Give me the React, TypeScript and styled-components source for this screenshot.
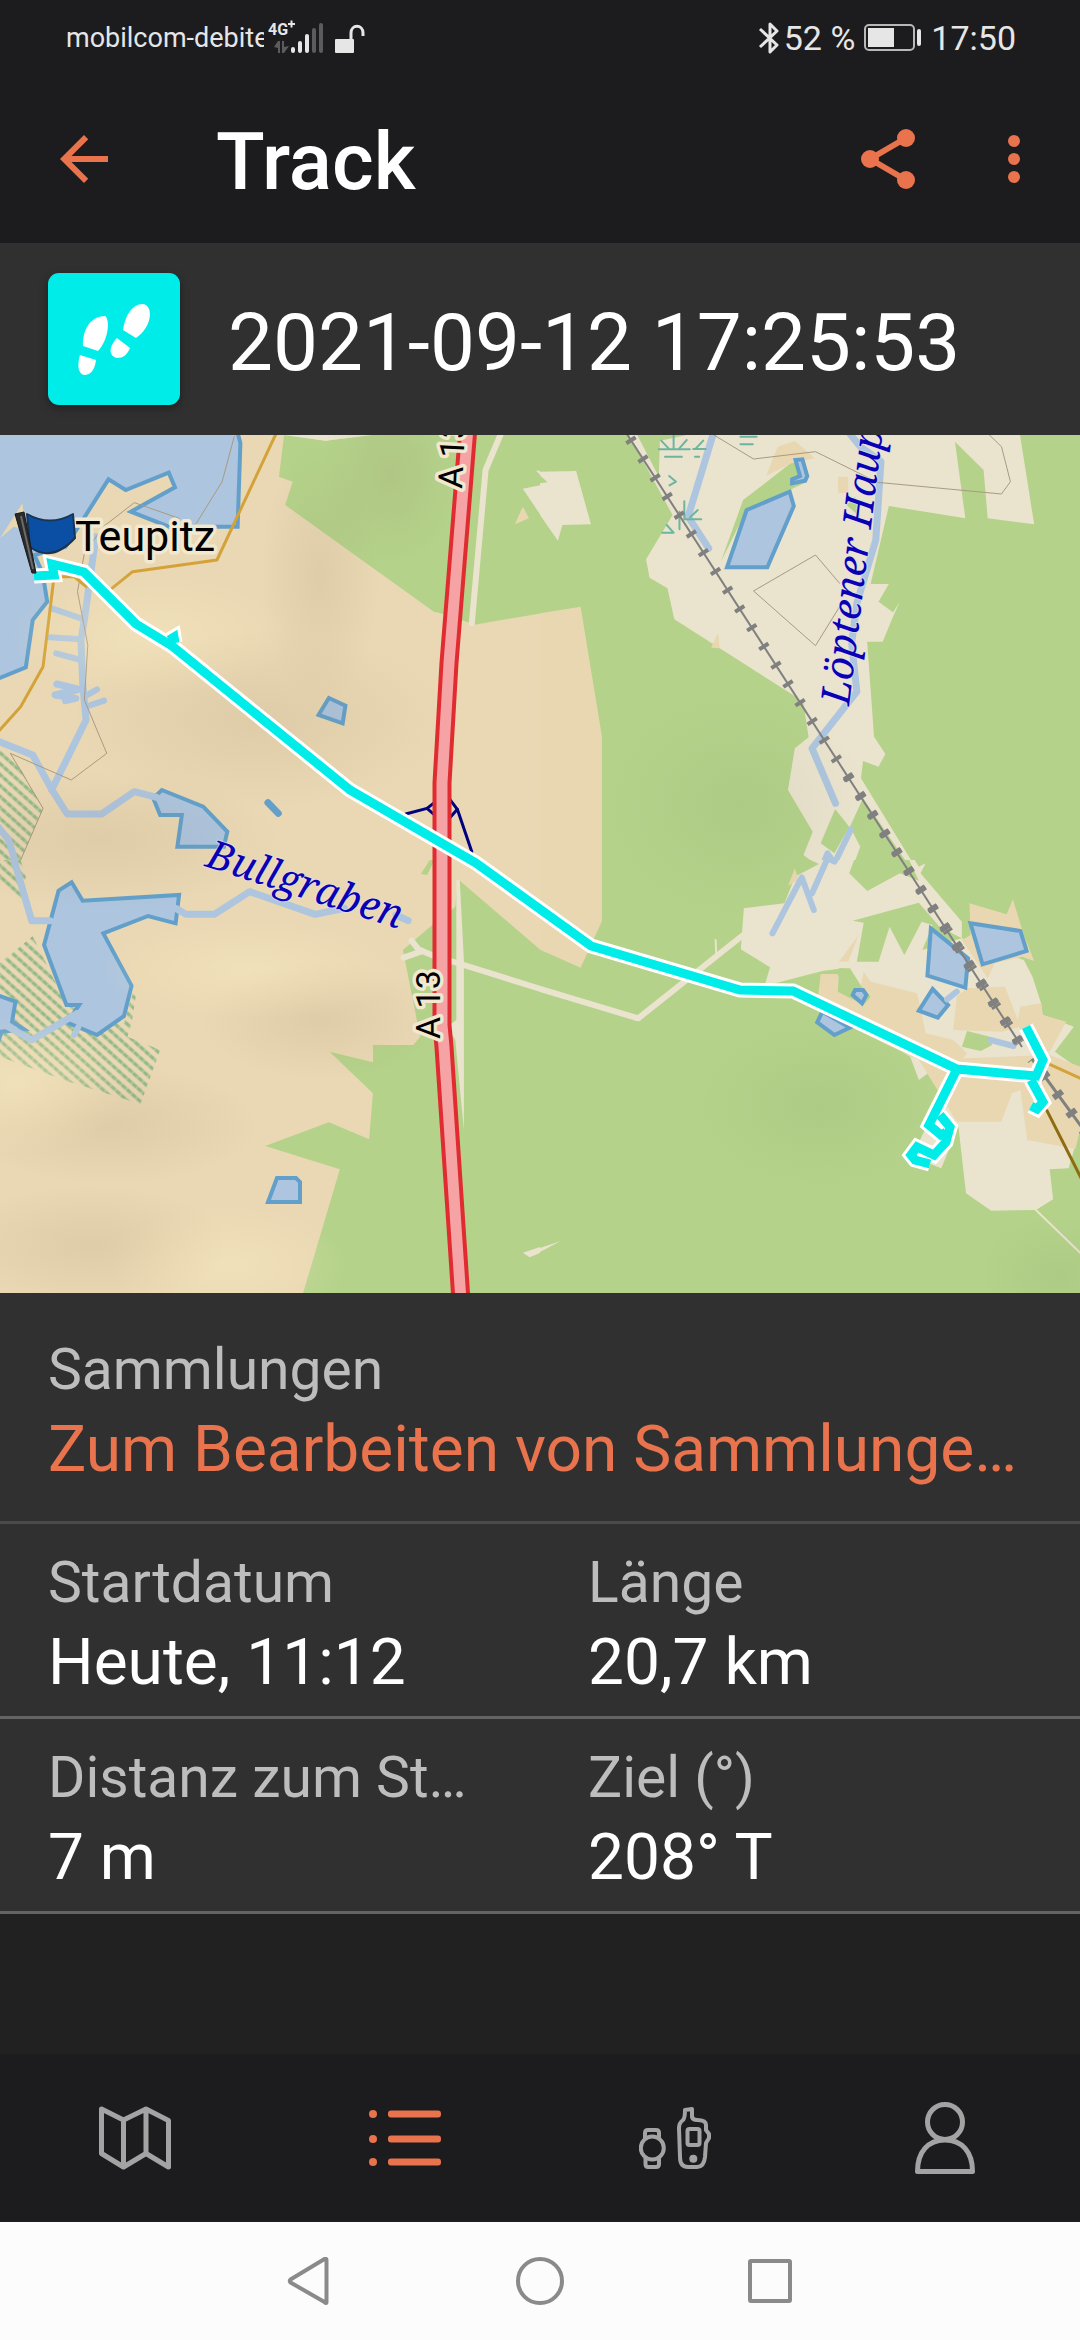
import React from "react";
import styled, { createGlobalStyle } from "styled-components";

const color = {
  bar: "#1c1c1e",
  panel: "#303030",
  page: "#212121",
  accent: "#e9734c",
  label: "#bdbdbd",
  icon: "#a3a3a3",
  cyan: "#00ece9",
  status: "#e6e6e6",
};

const GlobalStyle = createGlobalStyle`
  *, *::before, *::after { box-sizing: border-box; }
  body {
    margin: 0;
    background: ${color.page};
    font-family: Roboto, "Noto Sans", sans-serif;
  }
  h1, h2, dl, dt, dd, p { margin: 0; font-weight: 400; }
`;

const Screen = styled.div`
  display: flex;
  flex-direction: column;
  min-height: 100vh;
  background: ${color.page};
  color: #ffffff;
`;

const StatusBar = styled.div`
  display: flex;
  align-items: center;
  height: 75px;
  padding: 0 64px 0 66px;
  background: ${color.bar};
  color: ${color.status};
`;

const Carrier = styled.span`
  width: 198px;
  overflow: hidden;
  white-space: nowrap;
  font-size: 27px;
  line-height: 36px;
`;

const StatusGroup = styled.div<{ $end?: boolean; $tight?: boolean }>`
  display: flex;
  align-items: center;
  gap: ${(p) => (p.$tight ? 4 : 8)}px;
  margin-left: ${(p) => (p.$end ? "auto" : p.$tight ? "0" : "4px")};
`;

const StatusText = styled.span`
  font-size: 34px;
  line-height: 40px;
`;

const TitleBar = styled.header`
  display: flex;
  align-items: center;
  height: 168px;
  padding: 0 30px 0 48px;
  background: ${color.bar};
`;

const IconButton = styled.button`
  display: flex;
  align-items: center;
  justify-content: center;
  width: 72px;
  height: 72px;
  padding: 0;
  border: 0;
  background: none;
  color: ${color.accent};
  cursor: pointer;
`;

const Title = styled.h1`
  flex: 1;
  padding: 6px 0 0 96px;
  font-size: 80px;
  font-weight: 500;
  line-height: 94px;
`;

const Actions = styled.div`
  display: flex;
  gap: 54px;
`;

const TrackHeader = styled.section`
  display: flex;
  align-items: center;
  gap: 48px;
  height: 192px;
  padding: 0 48px;
  background: ${color.panel};
`;

const Badge = styled.span`
  display: flex;
  width: 132px;
  height: 132px;
  border-radius: 11px;
  background: ${color.cyan};
  box-shadow: 0 3px 8px rgba(0, 0, 0, 0.35);
`;

const TrackName = styled.h2`
  padding-top: 8px;
  font-size: 80px;
  line-height: 94px;
  white-space: nowrap;
`;

const MapView = styled.svg`
  display: block;
  width: 100%;
  height: auto;
`;

const MapLabel = styled.text<{ $size: number; $water?: boolean }>`
  font-family: ${(p) =>
    p.$water ? '"Noto Serif", "Liberation Serif", serif' : "Roboto, sans-serif"};
  font-style: ${(p) => (p.$water ? "italic" : "normal")};
  font-size: ${(p) => p.$size}px;
  fill: ${(p) => (p.$water ? "#0a00b4" : "#000000")};
  stroke: ${(p) => (p.$water ? "rgba(225,225,240,0.6)" : "#f1e8cf")};
  stroke-width: ${(p) => (p.$water ? 2 : 7)}px;
  stroke-linejoin: round;
  paint-order: stroke;
`;

const Details = styled.dl`
  display: flex;
  flex-direction: column;
  background: ${color.panel};
`;

const DetailRow = styled.div<{ $single?: boolean }>`
  display: grid;
  grid-template-columns: ${(p) => (p.$single ? "1fr" : "1fr 1fr")};
  padding: ${(p) => (p.$single ? "44px 0 34px" : "26px 0 16px")};
  border-bottom: 3px solid ${(p) => (p.$single ? "#4a4a4a" : "#646464")};
`;

const Detail = styled.div`
  display: flex;
  flex-direction: column;
  gap: 10px;
  min-width: 0;
  padding: 0 48px;
`;

const Label = styled.dt`
  overflow: hidden;
  text-overflow: ellipsis;
  white-space: nowrap;
  color: ${color.label};
  font-size: 57px;
  line-height: 66px;
`;

const Value = styled.dd`
  overflow: hidden;
  white-space: nowrap;
  font-size: 64px;
  line-height: 74px;
`;

const CollectionLink = styled.a`
  color: ${color.accent};
  text-decoration: none;
`;

const Filler = styled.div`
  flex: 1;
`;

const TabBar = styled.nav`
  display: grid;
  grid-template-columns: repeat(4, 1fr);
  justify-items: center;
  align-items: center;
  height: 168px;
  background: ${color.bar};
`;

const TabButton = styled(IconButton)<{ $active?: boolean }>`
  color: ${(p) => (p.$active ? color.accent : color.icon)};
`;

const SystemBar = styled.div`
  display: flex;
  align-items: center;
  justify-content: center;
  gap: 182px;
  height: 118px;
  background: #fcfcfc;
`;

const SystemButton = styled(IconButton)`
  width: 48px;
  height: 48px;
  color: #8a8a8a;
`;

/* ---------- map data ---------- */

type Shape = { kind: keyof typeof areaStyle; pts: string };
type Line = { kind: keyof typeof lineStyle; pts: string };

const areaStyle = {
  forest: { fill: "#b4d28a" },
  meadow: { fill: "#eae3ce" },
  field: { fill: "#e8d7b1" },
  water: { fill: "#adc5de", stroke: "#62a0cb", strokeWidth: 4 },
  marsh: { fill: "url(#marsh)" },
};

const lineStyle = {
  stream: { stroke: "#adc5de", strokeWidth: 7 },
  streamSmall: { stroke: "#adc5de", strokeWidth: 6 },
  bluff: { stroke: "#62a0cb", strokeWidth: 7 },
  gold: { stroke: "#d3a33a", strokeWidth: 3 },
  brown: { stroke: "#8e6d12", strokeWidth: 3 },
  boundary: { stroke: "#a99a82", strokeWidth: 1 },
  lane: { stroke: "#eae3ce", strokeWidth: 6 },
  laneThin: { stroke: "#eae3ce", strokeWidth: 2 },
  ramp: { stroke: "#000080", strokeWidth: 3 },
  reed: { stroke: "#6db5a0", strokeWidth: 2 },
};

type Tile = { id: string; transform: string; clip: string; areas: Shape[]; lines: Line[] };

const tiles: Tile[] = [
  {
    id: "nw",
    transform: "translate(0 -5) scale(0.34439 0.33333)",
    clip: "0,0 1568,0 1568,1290 0,1290",
    areas: [
      { kind: "forest", pts: "825,15 945,32 1080,15 1570,10 1570,550 1378,584 1300,555 1260,545 828,225 850,155 810,140" },
      { kind: "meadow", pts: "825,15 945,32 1080,15 1080,5 825,5" },
      { kind: "meadow", pts: "1518,176 1570,165 1570,256" },
      { kind: "meadow", pts: "1556,122 1570,122 1570,135" },
      { kind: "field", pts: "1518,230 1536,265 1495,283" },
      { kind: "water", pts: "-10,0 688,0 698,40 690,290 490,290 380,245 508,172 490,128 365,180 315,148 245,262 190,350 100,375 124,430 137,515 95,570 75,712 -10,748" },
      { kind: "field", pts: "0,325 65,220 75,300 40,290" },
      { kind: "water", pts: "470,1080 590,1130 660,1205 650,1250 515,1250 528,1155 465,1155 445,1105" },
      { kind: "water", pts: "955,804 1003,827 995,880 925,855" },
      { kind: "marsh", pts: "0,945 40,980 125,1135 60,1290 50,1320 0,1320" },
    ],
    lines: [
      { kind: "stream", pts: "278,320 245,570 235,630 240,760 250,870 150,1080" },
      { kind: "streamSmall", pts: "150,535 235,565" },
      { kind: "streamSmall", pts: "145,622 235,628" },
      { kind: "streamSmall", pts: "163,670 235,690" },
      { kind: "stream", pts: "165,762 230,778 160,795 220,805 190,812" },
      { kind: "streamSmall", pts: "245,800 282,778" },
      { kind: "streamSmall", pts: "250,830 302,812" },
      { kind: "stream", pts: "-10,932 95,975 150,1078 195,1152 295,1152 390,1085 455,1102" },
      { kind: "stream", pts: "-10,1185 25,1230 55,1330" },
      { kind: "boundary", pts: "680,20 645,155 570,280" },
      { kind: "boundary", pts: "520,265 390,218 300,290 245,370 225,485 255,645 245,810 310,970 207,1050 30,970 125,1135 60,1290 20,1330" },
      { kind: "lane", pts: "1455,10 1410,120 1370,580" },
      { kind: "gold", pts: "802,10 630,390 385,425 325,475" },
      { kind: "gold", pts: "250,470 215,440 157,440 125,710 60,830 -5,905" },
      { kind: "bluff", pts: "778,1118 808,1150" },
      { kind: "ramp", pts: "1178,1152 1240,1135 1265,1115" },
      { kind: "ramp", pts: "1240,1135 1265,1158" },
      { kind: "ramp", pts: "1300,1100 1328,1138 1370,1265" },
      { kind: "ramp", pts: "1305,1165 1328,1138" },
    ],
  },
  {
    id: "ne",
    transform: "translate(540 -5) scale(0.34439 0.33333)",
    clip: "0,0 1570,0 1570,1290 0,1290",
    areas: [
      { kind: "forest", pts: "-2,0 1570,0 1570,1320 -2,1320" },
      { kind: "field", pts: "-2,550 118,530 180,920 180,1320 -2,1320" },
      { kind: "meadow", pts: "-2,125 105,123 148,283 65,285 52,332 -2,252" },
      { kind: "forest", pts: "-2,135 22,157 -2,160" },
      { kind: "meadow", pts: "250,0 280,10 345,140 348,32 425,15 1393,10 1435,283 1300,265 1288,120 1205,35 1235,265 1013,228 960,462 1013,462 983,515 1025,547 1045,515 1025,560 995,635 950,635 970,920 1003,972 983,1010 938,993 932,1045 1095,1320 1080,1320 938,1105 900,1190 930,1250 905,1320 810,1310 765,1275 792,1205 720,1080 740,955 780,922 765,820 735,795 390,568 370,475 318,443 308,388 385,255" },
      { kind: "forest", pts: "740,90 775,155 725,180 600,240 525,395 590,210" },
      { kind: "forest", pts: "857,1137 898,1190 855,1270 815,1240" },
      { kind: "field", pts: "690,50 740,33 798,85 730,100 657,137" },
      { kind: "field", pts: "865,140 895,140 895,190 865,188" },
      { kind: "field", pts: "517,608 522,655 497,653" },
      { kind: "forest", pts: "915,200 930,262 890,225" },
      { kind: "water", pts: "600,240 725,185 737,228 660,412 543,412" },
      { kind: "water", pts: "742,90 762,88 776,138 770,152 732,160 732,148 755,138" },
    ],
    lines: [
      { kind: "stream", pts: "505,5 430,260 490,355" },
      { kind: "stream", pts: "895,5 930,50 990,95 975,330 920,520 905,640 920,785 790,955 858,1120" },
      { kind: "streamSmall", pts: "903,1198 855,1300 835,1270 810,1330" },
      { kind: "boundary", pts: "505,15 620,87 800,65 980,157 1340,192 1366,155 1340,50 1300,10" },
      { kind: "boundary", pts: "870,460 800,375 620,483 800,647 870,530" },
      { kind: "reed", pts: "345,58 435,58" },
      { kind: "reed", pts: "388,15 388,58" },
      { kind: "reed", pts: "352,32 374,56" },
      { kind: "reed", pts: "426,30 404,56" },
      { kind: "reed", pts: "363,80 412,80" },
      { kind: "reed", pts: "445,57 481,57" },
      { kind: "reed", pts: "474,32 452,56" },
      { kind: "reed", pts: "450,80 462,80" },
      { kind: "reed", pts: "582,20 629,20" },
      { kind: "reed", pts: "582,43 618,43" },
      { kind: "reed", pts: "375,138 395,155 376,166" },
      { kind: "reed", pts: "419,214 419,268 468,268" },
      { kind: "reed", pts: "405,245 405,298" },
      { kind: "reed", pts: "436,262 458,240" },
      { kind: "reed", pts: "355,308 388,308 368,285" },
    ],
  },
  {
    id: "sw",
    transform: "translate(0 425) scale(0.34439 0.33333)",
    clip: "0,0 1568,0 1568,1310 0,1310",
    areas: [
      { kind: "marsh", pts: "0,0 60,0 75,50 60,130 0,60" },
      { kind: "marsh", pts: "95,228 193,435 360,490 385,400 395,405 382,490 370,530 465,570 408,732 200,665 0,590 0,310" },
      { kind: "forest", pts: "1248,0 1222,42 1240,45 1262,0" },
      { kind: "forest", pts: "1330,58 1570,270 1570,1310 877,1310 987,928 770,858 955,787 1072,838 1083,700 957,575 1083,607 1083,555 1200,555 1220,530 1170,270 1255,195 1322,140" },
      { kind: "meadow", pts: "1325,60 1335,60 1347,300 1347,810 1322,540 1300,500 1325,480" },
      { kind: "meadow", pts: "1518,1178 1570,1160 1570,1178 1538,1192" },
      { kind: "water", pts: "170,92 208,67 240,122 520,105 510,190 430,168 300,220 382,377 360,468 282,525 195,488 230,435 193,435 128,255" },
      { kind: "water", pts: "-10,405 45,425 35,485 70,508 5,515 -10,560" },
    ],
    lines: [
      { kind: "stream", pts: "38,-10 92,182 145,182" },
      { kind: "stream", pts: "510,145 540,163 622,163 725,95 915,163 1000,145" },
      { kind: "stream", pts: "1150,165 1185,182" },
      { kind: "stream", pts: "225,460 92,540 15,495" },
      { kind: "streamSmall", pts: "228,500 215,525" },
      { kind: "lane", pts: "1195,242 1215,268 1260,288" },
      { kind: "lane", pts: "1172,293 1222,275" },
      { kind: "lane", pts: "1300,300 1570,387" },
    ],
  },
  {
    id: "se",
    transform: "translate(540 425) scale(0.34439 0.33333)",
    clip: "0,0 1570,0 1570,1310 0,1310",
    areas: [
      { kind: "forest", pts: "-2,0 1570,0 1570,1310 -2,1310" },
      { kind: "field", pts: "-2,0 180,0 180,183 118,323 -2,268" },
      { kind: "meadow", pts: "-2,1165 60,1143 -2,1177" },
      { kind: "meadow", pts: "785,0 912,0 898,40 950,93 1045,40 1100,62 1072,0 1088,0 1100,20 1120,10 1105,40 1225,185 1225,235 1160,200 1100,128 908,182 940,188 920,305 983,305 1015,200 1058,285 1108,185 1140,195 1110,270 1225,235 1405,300 1430,350 1455,430 1460,465 1550,500 1495,575 1570,630 1570,800 1535,925 1480,928 1490,1018 1440,1050 1310,1052 1237,1000 1215,800 1165,925 1080,890 1150,740 1160,650 1140,630 1100,660 1075,590 940,500 815,440 880,325 820,333 652,378 668,322 583,268 592,145 710,130 740,50 810,12" },
      { kind: "field", pts: "740,25 750,60 720,78" },
      { kind: "field", pts: "1247,130 1355,163 1373,118 1405,225 1435,303 1400,290 1320,310 1300,355 1225,240 1250,225" },
      { kind: "field", pts: "815,342 865,342 865,395 925,410 940,335 960,365 1095,400 1120,520 1200,540 1240,580 1220,605 1130,610 1080,590 803,450" },
      { kind: "field", pts: "925,225 895,305 868,305" },
      { kind: "forest", pts: "868,325 900,325 940,390 960,410 940,435 865,395" },
      { kind: "field", pts: "1210,410 1240,385 1350,380 1395,500 1340,515 1200,510" },
      { kind: "field", pts: "1395,440 1455,430 1460,465 1528,485 1480,575 1440,570 1385,495" },
      { kind: "field", pts: "1100,600 1480,585 1570,620 1570,800 1555,867 1415,840 1395,690 1370,700 1340,785 1210,785 1160,700" },
      { kind: "forest", pts: "1240,513 1312,532 1312,556 1280,573 1225,560" },
      { kind: "water", pts: "1135,205 1243,295 1235,383 1125,347" },
      { kind: "water", pts: "1250,190 1395,213 1413,273 1285,313" },
      { kind: "water", pts: "1140,387 1185,435 1155,473 1100,452" },
      { kind: "water", pts: "915,390 938,390 948,405 935,430 908,405" },
      { kind: "water", pts: "820,455 900,503 855,525 805,487" },
    ],
    lines: [
      { kind: "streamSmall", pts: "675,220 760,52 795,150" },
      { kind: "streamSmall", pts: "790,100 835,-5 855,5 870,-20" },
      { kind: "streamSmall", pts: "1182,418 1210,395" },
      { kind: "streamSmall", pts: "1308,540 1375,558" },
      { kind: "lane", pts: "-5,385 285,475 590,225" },
      { kind: "laneThin", pts: "510,240 512,290" },
      { kind: "laneThin", pts: "1440,1050 1570,1180" },
      { kind: "gold", pts: "1480,613 1575,658" },
      { kind: "brown", pts: "1472,752 1575,962" },
    ],
  },
];

const pondNorth = "276,967 291,974 288,992 267,984";
const pondSouth = "277,743 296,743 300,747 300,767 268,767";

const shading = [
  { cx: 260, cy: 285, rx: 190, ry: 90, fill: "url(#shadeDark)" },
  { cx: 320, cy: 140, rx: 60, ry: 130, fill: "url(#shadeDark)" },
  { cx: 100, cy: 405, rx: 180, ry: 70, fill: "url(#shadeDark)" },
  { cx: 110, cy: 690, rx: 150, ry: 60, fill: "url(#shadeDark)" },
  { cx: 320, cy: 585, rx: 120, ry: 60, fill: "url(#shadeDark)" },
  { cx: 90, cy: 810, rx: 140, ry: 60, fill: "url(#shadeDark)" },
  { cx: 390, cy: 40, rx: 70, ry: 90, fill: "url(#shadeDark)" },
  { cx: 740, cy: 370, rx: 130, ry: 110, fill: "url(#shadeFaint)" },
  { cx: 820, cy: 670, rx: 120, ry: 80, fill: "url(#shadeFaint)" },
  { cx: 1060, cy: 840, rx: 80, ry: 60, fill: "url(#shadeFaint)" },
  { cx: 250, cy: 535, rx: 150, ry: 50, fill: "url(#shadeLight)" },
  { cx: 20, cy: 650, rx: 110, ry: 70, fill: "url(#shadeLight)" },
  { cx: 230, cy: 830, rx: 120, ry: 60, fill: "url(#shadeLight)" },
  { cx: 150, cy: 200, rx: 140, ry: 60, fill: "url(#shadeLight)" },
];

const motorway = "468,-8 449,228 442,348 442,590 444,612 461,866";
const railway = "625,-4 1022,612";
const railwaySouth = "1032,624 1086,698";
const routes = [
  "169,205 174,202 175,208",
  "1031,645 1043,667 1037,674 1031,671",
  "957,634 929,690 941,700 946,697",
  "940,680 950,692 946,707 934,720 917,712 911,720 915,725 930,729",
  "34,141 54,140 52,129 84,137 136,189 172,211 350,355 476,428 591,511 740,555 793,556 957,634 1036,641 1043,625 1026,592",
];

const RouteMap = () => (
  <MapView viewBox="0 0 1080 858" role="img" aria-label="Karte">
    <defs>
      <pattern id="marsh" width="20" height="24" patternUnits="userSpaceOnUse" patternTransform="rotate(43)">
        <path d="M0 12H14" stroke="#95b98a" strokeWidth="10" />
        <path d="M14 12H20" stroke="#aec696" strokeWidth="10" />
      </pattern>
      <radialGradient id="shadeDark">
        <stop offset="0" stopColor="#8a6a50" stopOpacity="0.11" />
        <stop offset="1" stopColor="#8a6a50" stopOpacity="0" />
      </radialGradient>
      <radialGradient id="shadeFaint">
        <stop offset="0" stopColor="#6a7a50" stopOpacity="0.08" />
        <stop offset="1" stopColor="#6a7a50" stopOpacity="0" />
      </radialGradient>
      <radialGradient id="shadeLight">
        <stop offset="0" stopColor="#fff0c4" stopOpacity="0.35" />
        <stop offset="1" stopColor="#fff0c4" stopOpacity="0" />
      </radialGradient>
      {tiles.map((t) => (
        <clipPath id={`clip-${t.id}`} key={t.id}>
          <polygon points={t.clip} />
        </clipPath>
      ))}
    </defs>
    <rect width="1080" height="858" fill="#e9d8b3" />
    {tiles.map((t) => (
      <g key={t.id} transform={t.transform} clipPath={`url(#clip-${t.id})`}>
        {t.areas.map((a, i) => (
          <polygon key={`a${i}`} points={a.pts} {...areaStyle[a.kind]} vectorEffect="non-scaling-stroke" />
        ))}
        {t.lines.map((l, i) => (
          <polyline
            key={`l${i}`}
            points={l.pts}
            fill="none"
            strokeLinecap="round"
            strokeLinejoin="round"
            vectorEffect="non-scaling-stroke"
            {...lineStyle[l.kind]}
          />
        ))}
      </g>
    ))}
    <polygon points={pondSouth} {...areaStyle.water} />
    {shading.map((s, i) => (
      <ellipse key={i} {...s} />
    ))}
    <g fill="none" stroke="#808080">
      <polyline points={railway} strokeWidth="2" />
      <polyline points={railway} strokeWidth="11" strokeDasharray="4 18.3" strokeDashoffset="-9" />
      <polyline points="846,338 1022,612" strokeWidth="10" strokeDasharray="6 16.3" strokeDashoffset="-2" />
      <polyline points="946,493 1020,608" strokeWidth="10" strokeDasharray="3 19.3" strokeDashoffset="-2" />
      <polyline points={railwaySouth} strokeWidth="3" />
      <polyline points={railwaySouth} strokeWidth="11" strokeDasharray="6 17" strokeDashoffset="-18" />
    </g>
    <g fill="none" strokeLinejoin="round">
      <polyline points={motorway} stroke="#e02b31" strokeWidth="19" />
      <polyline points={motorway} stroke="#f5a3a5" strokeWidth="11" />
    </g>
    <g fill="none" strokeLinejoin="miter">
      {routes.map((r) => (
        <polyline key={r} points={r} stroke="#ffffff" strokeWidth="15" />
      ))}
      {routes.map((r) => (
        <polyline key={r} points={r} stroke={color.cyan} strokeWidth="9" />
      ))}
    </g>
    <MapLabel $size={43} x="75" y="116">Teupitz</MapLabel>
    <MapLabel $size={34} transform="translate(462 54) rotate(-87)">A 13</MapLabel>
    <MapLabel $size={34} transform="translate(440 604) rotate(-90)">A 13</MapLabel>
    <MapLabel $size={40} $water transform="translate(204 431) rotate(18)">Bullgraben</MapLabel>
    <MapLabel $size={40} $water transform="translate(849 271) rotate(-83)">Löptener Haup</MapLabel>
    <g strokeLinejoin="round">
      <path d="M27 79Q50 92 73 79L75 103Q52 128 30 112Z" fill="#0a4fa3" stroke="#1b3450" strokeWidth="2" />
      <path d="M15 79L24 77L36 138H32Z" fill="#2b2b2b" stroke="#1a1a1a" strokeWidth="1" />
      <path d="M21 81L33 134" stroke="#6a6a6a" strokeWidth="2" />
    </g>
  </MapView>
);

/* ---------- icons ---------- */

const SignalIcon = () => (
  <svg width="58" height="36" viewBox="0 0 58 36" role="img" aria-label="4G+">
    <text x="0" y="15" fontSize="16" fontWeight="700" fontFamily="Roboto, sans-serif" fill={color.status}>4G</text>
    <path d="M20 4H27M23.500 0.500V7.500" stroke={color.status} strokeWidth="2" />
    <path d="M6 27L10 21H12V33H10V28ZM14 21H16V27L21 26L16 33H14Z" fill="#5c5c5e" />
    <g strokeWidth="4" strokeLinecap="round">
      <path d="M25 29V31M32 23V31M39 16V31" stroke={color.status} />
      <path d="M46 10V31M53 5V31" stroke="#5c5c5e" />
    </g>
  </svg>
);

const LockIcon = () => (
  <svg width="32" height="36" viewBox="0 0 32 36" aria-hidden="true">
    <rect x="1" y="19" width="19" height="14" rx="1" fill={color.status} />
    <path d="M17 20V13C17 4 29 4 29 13V16" fill="none" stroke={color.status} strokeWidth="3" />
  </svg>
);

const BluetoothIcon = () => (
  <svg width="22" height="36" viewBox="0 0 22 36" aria-hidden="true">
    <path d="M2 9L19 25L12 32V4L19 11L2 27" fill="none" stroke={color.status} strokeWidth="3" strokeLinejoin="round" />
  </svg>
);

const BatteryIcon = () => (
  <svg width="60" height="30" viewBox="0 0 60 30" aria-hidden="true">
    <rect x="2" y="2" width="49" height="25" rx="4" fill="none" stroke="#b8b8b8" strokeWidth="2" />
    <rect x="5" y="5" width="26" height="19" fill={color.status} />
    <rect x="54" y="6" width="4" height="17" rx="2" fill={color.status} />
  </svg>
);

const BackIcon = () => (
  <svg width="72" height="72" viewBox="0 0 24 24" fill="currentColor" aria-hidden="true">
    <path d="M20 11H7.830l5.590-5.590L12 4l-8 8 8 8 1.410-1.410L7.830 13H20v-2z" />
  </svg>
);

const ShareIcon = () => (
  <svg width="72" height="72" viewBox="0 0 24 24" fill="currentColor" aria-hidden="true">
    <path d="M6 12L18 5M6 12L18 19" stroke="currentColor" strokeWidth="2" />
    <circle cx="18" cy="5" r="3" />
    <circle cx="6" cy="12" r="3" />
    <circle cx="18" cy="19" r="3" />
  </svg>
);

const MoreIcon = () => (
  <svg width="72" height="72" viewBox="0 0 24 24" fill="currentColor" aria-hidden="true">
    <circle cx="12" cy="6" r="2" />
    <circle cx="12" cy="12" r="2" />
    <circle cx="12" cy="18" r="2" />
  </svg>
);

const FootprintsIcon = () => (
  <svg width="132" height="132" viewBox="0 0 132 132" fill="#ffffff" aria-hidden="true">
    <path d="M35 73C34 58 42 43 57 43C62 46 61 66 50 78Z" />
    <path d="M32 82L48 87C47 96 43 102 36 102C30 101 29 92 32 82Z" />
    <path d="M75 57C77 43 84 31 95 31C106 33 104 54 88 65Z" />
    <path d="M69 65L82 75C79 82 75 85 69 85C60 83 61 73 69 65Z" />
  </svg>
);

const MapIcon = () => (
  <svg width="72" height="72" viewBox="0 0 72 72" fill="none" stroke="currentColor" strokeWidth="5" strokeLinejoin="round" aria-hidden="true">
    <path d="M2.500 7L24.500 18L47 7L69.500 18.500V65L47 51.500L24.500 65L2.500 51.500ZM24.500 18V65M47 7V51.500" />
  </svg>
);

const ListIcon = () => (
  <svg width="72" height="72" viewBox="0 0 72 72" fill="currentColor" aria-hidden="true">
    {[12, 37, 60].map((y) => (
      <g key={y}>
        <circle cx="4" cy={y} r="4" />
        <rect x="19" y={y - 3.5} width="53" height="7" rx="3" />
      </g>
    ))}
  </svg>
);

const DevicesIcon = () => (
  <svg width="72" height="72" viewBox="0 0 72 72" fill="none" stroke="currentColor" strokeWidth="4" strokeLinejoin="round" aria-hidden="true">
    <circle cx="13.300" cy="46" r="11.500" />
    <path d="M6 36V31Q6 28 9 28H17Q20 28 20 31V36M6.500 56V62Q6.500 65 9 65H17Q20 65 20 62V56" />
    <path d="M46 8L53 7V15Q54 18 58 18Q67 18 67 23V28L70 32V36L67 41L66 55Q65 65 58 65H49Q41 65 41 55L40 26Q40 21 44 18Q46 16 46 8Z" />
    <rect x="48.500" y="27" width="12" height="16" rx="2" />
    <circle cx="54.300" cy="56.700" r="4" fill="currentColor" stroke="none" />
  </svg>
);

const PersonIcon = () => (
  <svg width="72" height="72" viewBox="0 0 72 72" fill="none" stroke="currentColor" strokeWidth="5" strokeLinejoin="round" aria-hidden="true">
    <circle cx="36" cy="20" r="17.500" />
    <path d="M8.500 69.500C8.500 50 19 38 36 38S63.500 50 63.500 69.500Z" />
  </svg>
);

const systemShapes: Record<string, React.ReactNode> = {
  "Zurück": <path d="M40.500 3V45Q40.500 47 38.500 45L4.500 25.500Q3 24 4.500 22.500L38.500 2Q40.500 1 40.500 3Z" />,
  Start: <circle cx="24" cy="24" r="22" />,
  "Übersicht": <rect x="4" y="4" width="40" height="40" rx="1" />,
};

/* ---------- screen ---------- */

const tabs = [
  { name: "Karte", icon: <MapIcon /> },
  { name: "Listen", icon: <ListIcon />, active: true },
  { name: "Geräte", icon: <DevicesIcon /> },
  { name: "Profil", icon: <PersonIcon /> },
];

const rows = [
  [
    { label: "Startdatum", value: "Heute, 11:12" },
    { label: "Länge", value: "20,7 km" },
  ],
  [
    { label: "Distanz zum St…", value: "7 m" },
    { label: "Ziel (°)", value: "208° T" },
  ],
];

export default function App() {
  return (
    <Screen>
      <GlobalStyle />
      <StatusBar>
        <Carrier>mobilcom-debite</Carrier>
        <StatusGroup>
          <SignalIcon />
          <LockIcon />
        </StatusGroup>
        <StatusGroup $end>
          <StatusGroup $tight>
            <BluetoothIcon />
            <StatusText>52 %</StatusText>
          </StatusGroup>
          <BatteryIcon />
          <StatusText>17:50</StatusText>
        </StatusGroup>
      </StatusBar>
      <TitleBar>
        <IconButton type="button" aria-label="Zurück">
          <BackIcon />
        </IconButton>
        <Title>Track</Title>
        <Actions>
          <IconButton type="button" aria-label="Teilen">
            <ShareIcon />
          </IconButton>
          <IconButton type="button" aria-label="Mehr">
            <MoreIcon />
          </IconButton>
        </Actions>
      </TitleBar>
      <TrackHeader>
        <Badge>
          <FootprintsIcon />
        </Badge>
        <TrackName>2021-09-12 17:25:53</TrackName>
      </TrackHeader>
      <RouteMap />
      <Details>
        <DetailRow $single>
          <Detail>
            <Label>Sammlungen</Label>
            <Value>
              <CollectionLink href="#sammlungen">Zum Bearbeiten von Sammlunge…</CollectionLink>
            </Value>
          </Detail>
        </DetailRow>
        {rows.map((row) => (
          <DetailRow key={row[0].label}>
            {row.map((d) => (
              <Detail key={d.label}>
                <Label>{d.label}</Label>
                <Value>{d.value}</Value>
              </Detail>
            ))}
          </DetailRow>
        ))}
      </Details>
      <Filler />
      <TabBar>
        {tabs.map((t) => (
          <TabButton key={t.name} type="button" aria-label={t.name} $active={t.active}>
            {t.icon}
          </TabButton>
        ))}
      </TabBar>
      <SystemBar>
        {Object.entries(systemShapes).map(([name, shape]) => (
          <SystemButton key={name} type="button" aria-label={name}>
            <svg width="48" height="48" viewBox="0 0 48 48" fill="none" stroke="currentColor" strokeWidth="4" strokeLinejoin="round" aria-hidden="true">
              {shape}
            </svg>
          </SystemButton>
        ))}
      </SystemBar>
    </Screen>
  );
}
